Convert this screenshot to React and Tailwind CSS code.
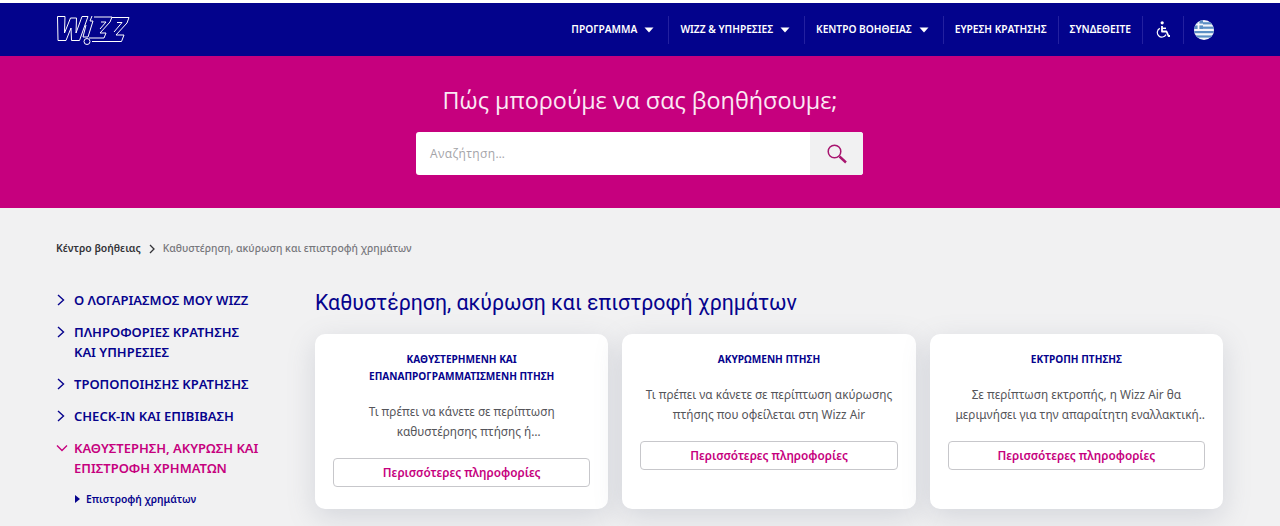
import React from "react";

function Caret() {
  return (
    <svg width="10" height="6" viewBox="0 0 10 6" className="ml-[7px] mr-[3px] mt-[1px]">
      <path d="M0.5 0.5H9.5L5 5.5Z" fill="#fff" />
    </svg>
  );
}

function Chevron({ className = "" }) {
  return (
    <svg width="8" height="12" viewBox="0 0 8 12" className={className} fill="none" stroke="currentColor" strokeWidth="1.4">
      <path d="M1 1L6.5 6L1 11" />
    </svg>
  );
}

function Divider() {
  return <span className="h-[28px] w-px bg-[#23209f]" />;
}

function NavItem({ children, caret }) {
  return (
    <span className="flex items-center whitespace-nowrap px-[11px] text-[10.2px] font-semibold text-white">
      {children}
      {caret && <Caret />}
    </span>
  );
}

function Logo() {
  return (
    <svg width="74" height="32" viewBox="0 0 74 32" className="block">
      <g fill="none" stroke="#fff" strokeWidth="1" strokeLinejoin="round">
        <path d="M1.5 2.5H9L8.5 19L14.5 4H20.5L20 19L26 2.5H32L23.5 26.5H15.5L15 14L10 26.5H2Z" />
        <path d="M36 2L34 7H37L32 23H27L30 11" />
        <circle cx="31" cy="27.5" r="3" />
        <path d="M38 3H56L54 8L44 19H50L48 24H33" />
        <path d="M45 8H50L44 15" />
        <path d="M56 3.5H73L71 9L60 21H68L65.5 27.5H36" />
        <path d="M61 8.5H66L58 18" />
      </g>
    </svg>
  );
}

function GreekFlag() {
  return (
    <svg width="20" height="20" viewBox="0 0 20 20" className="block">
      <defs>
        <clipPath id="flagclip">
          <circle cx="10" cy="10" r="10" />
        </clipPath>
      </defs>
      <g clipPath="url(#flagclip)">
        <rect width="20" height="20" fill="#f4f7fb" />
        <rect y="2.2" width="20" height="2.2" fill="#5c8fc4" />
        <rect y="6.6" width="20" height="2.2" fill="#5c8fc4" />
        <rect y="11" width="20" height="2.2" fill="#5c8fc4" />
        <rect y="15.4" width="20" height="2.2" fill="#5c8fc4" />
        <rect width="9" height="9" fill="#5c8fc4" />
        <rect x="3.6" width="1.8" height="9" fill="#f4f7fb" />
        <rect y="3.6" width="9" height="1.8" fill="#f4f7fb" />
      </g>
    </svg>
  );
}

function WheelchairIcon() {
  return (
    <svg width="16" height="17" viewBox="0 0 16 17" fill="none" stroke="#fff" className="block">
      <circle cx="7.2" cy="1.8" r="1.6" fill="#fff" stroke="none" />
      <path d="M7 5V10.5H11.5L13.5 15H15" strokeWidth="1.8" strokeLinejoin="round" />
      <path d="M7 7.3H11" strokeWidth="1.5" />
      <path d="M4.8 7.4A4.6 4.6 0 1 0 11 13.6" strokeWidth="1.2" />
    </svg>
  );
}

function Header() {
  return (
    <header className="flex h-[53px] items-center justify-between bg-[#03038c] pl-[56px] pr-[66px]">
      <Logo />
      <nav className="flex items-center">
        <NavItem caret>ΠΡΟΓΡΑΜΜΑ</NavItem>
        <Divider />
        <NavItem caret>WIZZ & ΥΠΗΡΕΣΙΕΣ</NavItem>
        <Divider />
        <NavItem caret>ΚΕΝΤΡΟ ΒΟΗΘΕΙΑΣ</NavItem>
        <Divider />
        <NavItem>ΕΥΡΕΣΗ ΚΡΑΤΗΣΗΣ</NavItem>
        <Divider />
        <NavItem>ΣΥΝΔΕΘΕΙΤΕ</NavItem>
        <Divider />
        <span className="flex w-[40px] justify-center">
          <WheelchairIcon />
        </span>
        <Divider />
        <span className="ml-[10px]">
          <GreekFlag />
        </span>
      </nav>
    </header>
  );
}

function Hero() {
  return (
    <section className="flex h-[152px] flex-col items-center bg-[#c6007e] pt-[26px] [font-family:'Open_Sans',sans-serif]">
      <h1 className="text-[23.4px] font-normal leading-[36px] text-[#fbe9f4]">
        Πώς μπορούμε να σας βοηθήσουμε;
      </h1>
      <div className="mr-[1px] mt-[14px] flex h-[43px] w-[447px] overflow-hidden rounded-[3px] bg-white">
        <div className="flex flex-1 items-center pl-[14px] text-[12px] tracking-[0.35px] text-[#a4a4a8]">
          Αναζήτηση…
        </div>
        <div className="flex w-[53px] items-center justify-center bg-[#f1f1f2]">
          <svg width="20" height="20" viewBox="0 0 20 20" fill="none" stroke="#a8156f">
            <circle cx="7.5" cy="7.5" r="6.3" strokeWidth="1.5" />
            <path d="M12.5 12.5L19 18.5" strokeWidth="2.4" />
          </svg>
        </div>
      </div>
    </section>
  );
}

function SideItem({ children, active }) {
  const color = active ? "text-[#c6007e]" : "text-[#06038d]";
  return (
    <li className={"flex items-start text-[13px] font-semibold leading-[20px] " + color}>
      <span className="flex h-[20px] w-[18px] shrink-0 items-center">
        {active ? (
          <svg width="12" height="8" viewBox="0 0 12 8" fill="none" stroke="currentColor" strokeWidth="1.4">
            <path d="M1 1.5L6 6.5L11 1.5" />
          </svg>
        ) : (
          <Chevron className="ml-[1px]" />
        )}
      </span>
      <span>{children}</span>
    </li>
  );
}

function Sidebar() {
  return (
    <aside className="w-[259px] shrink-0 pt-[33px]">
      <ul className="flex flex-col gap-[12px]">
        <SideItem>Ο ΛΟΓΑΡΙΑΣΜΟΣ ΜΟΥ WIZZ</SideItem>
        <SideItem>
          ΠΛΗΡΟΦΟΡΙΕΣ ΚΡΑΤΗΣΗΣ
          <br />
          ΚΑΙ ΥΠΗΡΕΣΙΕΣ
        </SideItem>
        <SideItem>ΤΡΟΠΟΠΟΙΗΣΗΣ ΚΡΑΤΗΣΗΣ</SideItem>
        <SideItem>CHECK-IN ΚΑΙ ΕΠΙΒΙΒΑΣΗ</SideItem>
        <SideItem active>
          ΚΑΘΥΣΤΕΡΗΣΗ, ΑΚΥΡΩΣΗ ΚΑΙ
          <br />
          ΕΠΙΣΤΡΟΦΗ ΧΡΗΜΑΤΩΝ
        </SideItem>
      </ul>
      <div className="mt-[11px] flex items-center pl-[19px] text-[10.3px] font-semibold leading-[20px] text-[#06038d]">
        <svg width="5" height="8" viewBox="0 0 5 8" className="mr-[6px]">
          <path d="M0 0L5 4L0 8Z" fill="#06038d" />
        </svg>
        Επιστροφή χρημάτων
      </div>
    </aside>
  );
}

function Card({ title, lines, secondLine = "" }) {
  return (
    <article className="flex h-[175px] flex-col items-center rounded-[10px] bg-white px-[18px] pt-[17px] shadow-[0_8px_28px_rgba(110,120,140,0.22)]">
      <h3 className="text-center text-[10.1px] font-bold leading-[17px] text-[#06038d]">
        {title.map((t) => (
          <div key={t}>{t}</div>
        ))}
      </h3>
      <p className="mt-[16px] whitespace-nowrap text-center text-[11.8px] leading-[20px] text-[#55555a]">
        <span className="block">{lines[0]}</span>
        <span className={"block " + secondLine}>{lines[1]}</span>
      </p>
      <button className="mt-[17px] h-[29px] w-full rounded-[4px] border border-[#c7c7cb] bg-white text-[11.8px] font-semibold text-[#c6007e]">
        Περισσότερες πληροφορίες
      </button>
    </article>
  );
}

export default function App() {
  return (
    <div className="h-[526px] overflow-hidden bg-[#f1f1f2] [font-family:'Noto_Sans',sans-serif]">
      <div className="h-[3px] bg-white" />
      <Header />
      <Hero />
      <main className="pl-[56px] pr-[57px] pt-[33px]">
        <div className="flex h-[16px] items-center text-[10.4px] font-medium text-[#77777c]">
          <span className="font-semibold text-[#333338]">Κέντρο βοήθειας</span>
          <svg width="6" height="10" viewBox="0 0 6 10" fill="none" stroke="#333338" strokeWidth="1.3" className="ml-[8px] mr-[8px]">
            <path d="M1 1L5 5L1 9" />
          </svg>
          <span>Καθυστέρηση, ακύρωση και επιστροφή χρημάτων</span>
        </div>
        <div className="flex">
          <Sidebar />
          <div className="min-w-0 flex-1 pt-[31px]">
            <h2 className="text-[21.3px] font-normal leading-[30px] text-[#06038d] [font-family:Roboto,sans-serif]">
              Καθυστέρηση, ακύρωση και επιστροφή χρημάτων
            </h2>
            <div className="mt-[16px] grid grid-cols-3 gap-[14px]">
              <Card
                title={["ΚΑΘΥΣΤΕΡΗΜΕΝΗ ΚΑΙ", "ΕΠΑΝΑΠΡΟΓΡΑΜΜΑΤΙΣΜΕΝΗ ΠΤΗΣΗ"]}
                lines={["Τι πρέπει να κάνετε σε περίπτωση", "καθυστέρησης πτήσης ή…"]}
                secondLine="pl-[14px]"
              />
              <Card
                title={["ΑΚΥΡΩΜΕΝΗ ΠΤΗΣΗ"]}
                lines={["Τι πρέπει να κάνετε σε περίπτωση ακύρωσης", "πτήσης που οφείλεται στη Wizz Air"]}
              />
              <Card
                title={["ΕΚΤΡΟΠΗ ΠΤΗΣΗΣ"]}
                lines={["Σε περίπτωση εκτροπής, η Wizz Air θα", "μεριμνήσει για την απαραίτητη εναλλακτική.."]}
                secondLine="pl-[8px]"
              />
            </div>
          </div>
        </div>
      </main>
    </div>
  );
}
